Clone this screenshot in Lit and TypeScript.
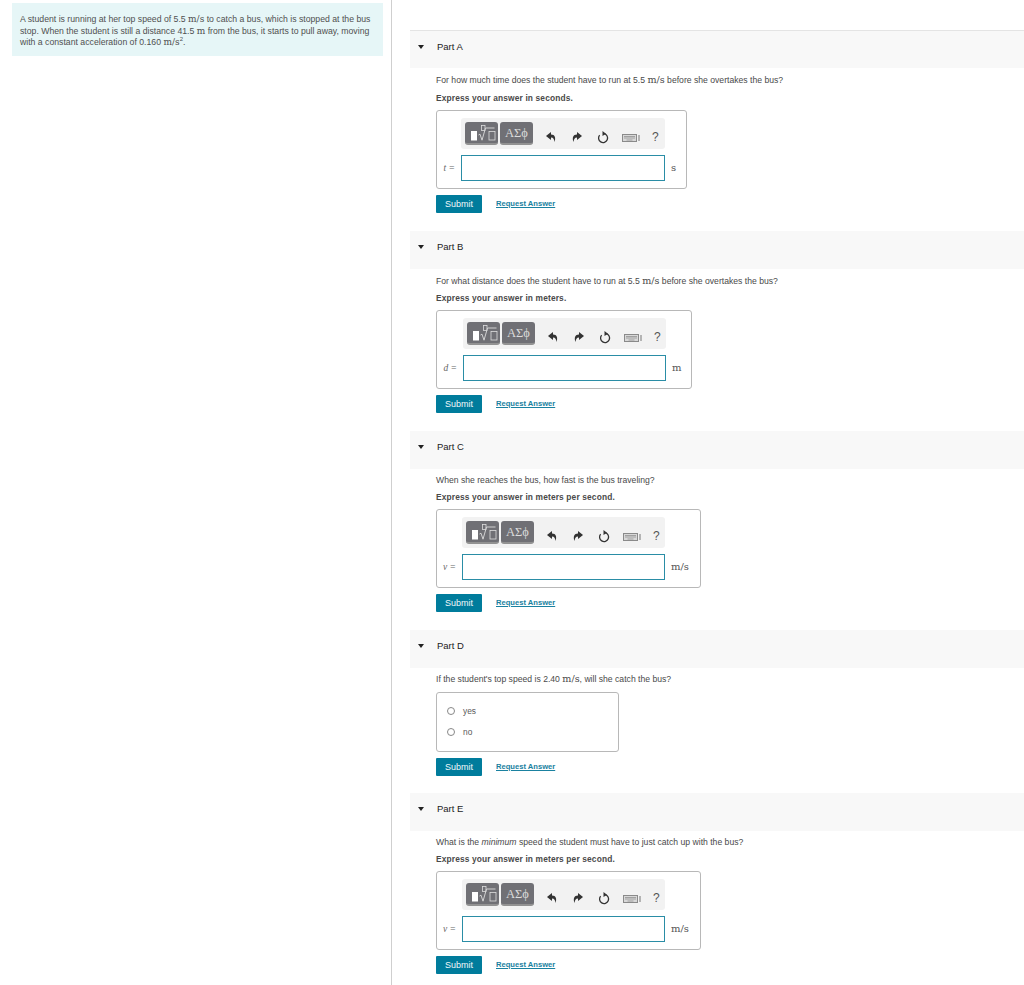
import { LitElement, html, css } from "lit";
import { customElement } from "lit/decorators.js";

const M = (s: string) => html`<span class="m">${s}</span>`;

interface Part {
  name: string;
  q: unknown;
  express?: string;
  label?: string;
  unit?: string;
  boxW?: number;
  inset?: number;
  inpW?: number;
  h: number;
  qLift: number;
  lift: number;
}

const parts: Part[] = [
  { name: "Part A", q: html`For how much time does the student have to run at 5.5 ${M("m/s")} before she overtakes the bus?`, express: "Express your answer in seconds.", label: "t =", unit: "s", boxW: 251, inset: 24, inpW: 204, h: 201, qLift: 0, lift: 0 },
  { name: "Part B", q: html`For what distance does the student have to run at 5.5 ${M("m/s")} before she overtakes the bus?`, express: "Express your answer in meters.", label: "d =", unit: "m", boxW: 256, inset: 26, inpW: 203, h: 200, qLift: 0, lift: 1 },
  { name: "Part C", q: html`When she reaches the bus, how fast is the bus traveling?`, express: "Express your answer in meters per second.", label: "v =", unit: "m/s", boxW: 265, inset: 25, inpW: 203, h: 199, qLift: 1, lift: 1 },
  { name: "Part D", q: html`If the student's top speed is 2.40 ${M("m/s")}, will she catch the bus?`, h: 163, qLift: 1, lift: 0 },
  { name: "Part E", q: html`What is the <i>minimum</i> speed the student must have to just catch up with the bus?`, express: "Express your answer in meters per second.", label: "v =", unit: "m/s", boxW: 265, inset: 25, inpW: 203, h: 192, qLift: 1, lift: 1 },
];

@customElement("app-root")
export class AppRoot extends LitElement {
  static styles = css`
    :host { display: block; width: 1024px; height: 985px; overflow: hidden; background: #fff; color: #4a4a4a; font: 8.65px/12px "Liberation Sans", Arial, sans-serif; }
    .page { display: flex; height: 985px; }
    .left { flex: none; width: 392px; height: 985px; box-sizing: border-box; padding: 3px 8px 0 12px; border-right: 1px solid #cfcfcf; }
    .info { background: #e6f6f7; height: 53px; box-sizing: border-box; padding: 11px 8px 0 8px; font-size: 8.7px; line-height: 11.7px; color: #505050; }
    .info .m { font-size: 9px; }
    .m { font-family: "DejaVu Serif", serif; font-size: 9.6px; }
    sup { font-size: 6px; line-height: 0; }
    .right { flex: 1; padding: 30px 0 0 18px; min-width: 0; }
    .head { height: 38px; background: #f8f8f8; display: flex; align-items: flex-start; padding: 9.5px 0 0 9px; box-sizing: border-box; color: #1c1c1c; font-size: 9.5px; }
    .first { border-top: 1px solid #e4e4e4; }
    .tri { width: 0; height: 0; border-left: 3.5px solid transparent; border-right: 3.5px solid transparent; border-top: 4px solid #222; margin: 4px 13px 0 -1px; }
    .body { padding: 0 0 0 26px; }
    .ex { height: 12px; font-weight: 700; font-size: 8.4px; letter-spacing: 0.14px; color: #4a4a4a; }
    .box { margin-top: 6px; height: 79px; box-sizing: border-box; border: 1px solid #b8b8b8; border-radius: 3px; padding-top: 7px; }
    .tb { height: 31px; box-sizing: border-box; background: #f2f2f2; border-radius: 3px; display: flex; align-items: center; padding: 0 0 0 4px; position: relative; }
    .btn { height: 23px; width: 33px; box-sizing: border-box; border-radius: 3px; background: #707075; border-bottom: 2px solid #929292; display: flex; align-items: center; justify-content: center; color: #dcdcdc; margin-right: 2px; font: 12.5px "Liberation Serif", serif; }
    .btn svg { display: block; }
    .txt { padding-top: 2px; }
    .ic { position: absolute; }
    .undo { left: 85px; top: 14px; }
    .redo { left: 111px; top: 14px; }
    .reload { left: 136px; top: 13px; }
    .kb { left: 161px; top: 16px; }
    .help { left: 191px; top: 12px; font-size: 12px; line-height: 14px; color: #555; }
    .row { display: flex; align-items: center; margin-top: 6px; position: relative; }
    .lab { position: absolute; right: 100%; margin-right: 6px; font: italic 9.5px "Liberation Serif", serif; white-space: nowrap; color: #666; }
    .inp { height: 26px; box-sizing: border-box; border: 1px solid #2a8da6; background: #fff; }
    .unit { margin: 0 0 2px 6px; font: 10px "DejaVu Serif", serif; color: #555; white-space: nowrap; }
    .act { display: flex; align-items: center; margin-top: 6px; }
    .sub { width: 46px; height: 18px; background: #007c9c; color: #f2f8fa; border-radius: 1px; display: flex; align-items: center; justify-content: center; font-size: 9px; }
    .req { margin-left: 14px; color: #1a81a0; font-weight: 700; font-size: 7.6px; text-decoration: underline; }
    .choices { width: 183px; height: 60px; box-sizing: border-box; margin-top: 7px; border: 1px solid #b8b8b8; border-radius: 3px; padding: 12px 0 0 10px; }
    .c { display: flex; align-items: center; height: 12px; margin-bottom: 9px; color: #5a5a5a; font-size: 8.4px; }
    .r { width: 8px; height: 8px; box-sizing: border-box; border: 1px solid #888; border-radius: 50%; margin-right: 8px; }
  `;

  toolbar() {
    return html`<div class="tb">
      <div class="btn">
        <svg width="31" height="21" viewBox="0 0 31 21">
          <rect x="5" y="9" width="6" height="9.500" fill="#fff"/>
          <rect x="15.500" y="3.500" width="3.500" height="5" fill="none" stroke="#ddd" stroke-width=".8"/>
          <path d="M12.500 13l1.500-.8 2 6L19.500 6h9" fill="none" stroke="#ddd" stroke-width=".9"/>
          <rect x="23" y="9.500" width="6" height="8.500" fill="none" stroke="#ddd" stroke-width=".8"/>
        </svg>
      </div>
      <div class="btn"><span class="txt">ΑΣϕ</span></div>
      <svg class="ic undo" width="10" height="10" viewBox="0 0 10 10"><path d="M5 0L0 4l5 4V5.500c2.500 0 3 1.500 3.500 4.500C10 6 9 2.500 5 2.500z" fill="#333"/></svg>
      <svg class="ic redo" width="10" height="10" viewBox="0 0 10 10"><path d="M5 0l5 4-5 4V5.500c-2.500 0-3 1.500-3.500 4.500C0 6 1 2.500 5 2.500z" fill="#333"/></svg>
      <svg class="ic reload" width="12" height="13" viewBox="0 0 12 13"><path d="M7.200 2.700A4.500 4.500 0 1 1 2.600 4.200" fill="none" stroke="#333" stroke-width="1.300"/><path d="M5.500 0l3.500 2.700-3.500 2.200z" fill="#333"/></svg>
      <svg class="ic kb" width="20" height="8" viewBox="0 0 20 8"><rect x=".5" y=".5" width="14" height="7" fill="#d8d8d8" stroke="#8a8a8a"/><path d="M2 2.500h11M2 4h11M4.500 6h6" stroke="#8a8a8a" stroke-width=".7"/><path d="M17 1v6" stroke="#777"/></svg>
      <span class="ic help">?</span>
    </div>`;
  }

  render() {
    return html`<div class="page">
      <div class="left">
        <div class="info">A student is running at her top speed of 5.5 ${M("m/s")} to catch a bus, which is stopped at the bus stop. When the student is still a distance 41.5 ${M("m")} from the bus, it starts to pull away, moving with a constant acceleration of 0.160 ${M("m/s")}<sup>2</sup>.</div>
      </div>
      <div class="right">
        ${parts.map((p, i) => html`<div style="height:${p.h}px">
          <div class="head ${i === 0 ? "first" : ""}"><span class="tri"></span>${p.name}</div>
          <div class="body" style="padding-top:${6 - p.qLift}px">
            <div style="height:12px">${p.q}</div>
            ${p.express ? html`<div class="ex" style="margin-top:${6 - p.lift}px">${p.express}</div>
              <div class="box" style="width:${p.boxW}px">
                <div style="padding-left:${p.inset}px;width:${p.inpW}px">${this.toolbar()}</div>
                <div class="row" style="margin-left:${p.inset}px"><span class="lab">${p.label}</span><div class="inp" style="width:${p.inpW}px"></div><span class="unit">${p.unit}</span></div>
              </div>` : html`<div class="choices">
                <div class="c"><span class="r"></span>yes</div>
                <div class="c"><span class="r"></span>no</div>
              </div>`}
            <div class="act"><div class="sub">Submit</div><span class="req">Request Answer</span></div>
          </div>
        </div>`)}
      </div>
    </div>`;
  }
}
